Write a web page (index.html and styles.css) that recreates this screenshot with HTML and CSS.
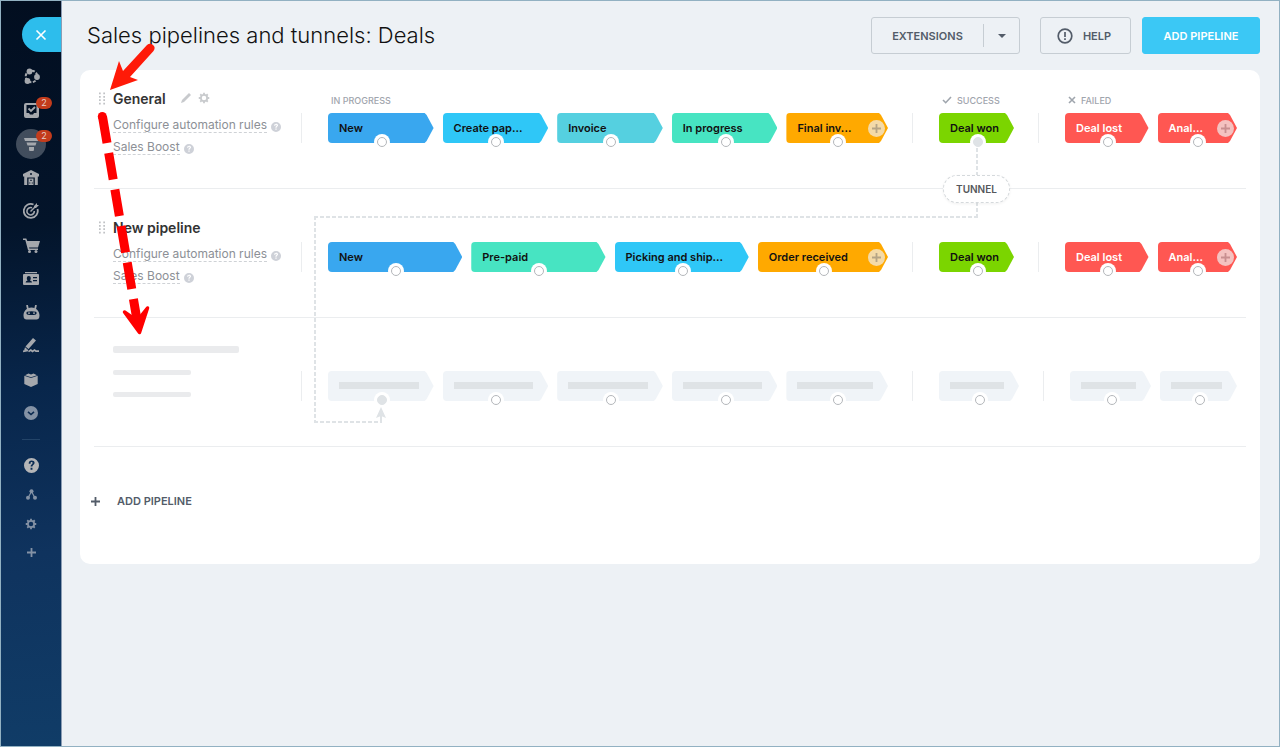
FILE: index.html
```html
<!DOCTYPE html>
<html lang="en">
<head>
  <meta charset="UTF-8" />
  <meta name="viewport" content="width=device-width, initial-scale=1.0" />
  <title>Sales pipelines and tunnels: Deals</title>
  <link rel="stylesheet" href="styles.css">
</head>
<body>
  <!-- shared icons -->
  <svg class="sprite" aria-hidden="true">
    <symbol id="help" viewBox="0 0 16 16">
      <path fill-rule="evenodd" fill="currentColor" d="M8 0a8 8 0 1 1 0 16A8 8 0 0 1 8 0zM5 6h2c0-1.500.3-1.700 1-1.700s1.200.4 1.200 1c0 1.300-2.200 1.400-2.200 3.700h2c0-1.600 2.300-1.800 2.300-3.900C11.300 3.500 9.900 2.600 8.100 2.600 6.200 2.600 5 3.800 5 6zm2 4.500v2h2v-2z"/>
    </symbol>
    <symbol id="gear" viewBox="0 0 16 16">
      <circle cx="8" cy="8" r="4.200" fill="none" stroke="currentColor" stroke-width="2.400"/>
      <path stroke="currentColor" stroke-width="2.400" d="M8 1v2.500M8 12.500V15M1 8h2.500M12.500 8H15M3 3l1.800 1.800M11.200 11.200L13 13M3 13l1.800-1.800M11.200 4.800L13 3"/>
    </symbol>
    <symbol id="plus" viewBox="0 0 10 10">
      <path d="M5 0v10M0 5h10" stroke="currentColor" stroke-width="2"/>
    </symbol>
    <symbol id="drag" viewBox="0 0 7 14">
      <path d="M0 1h2M5 1h2M0 5h2M5 5h2M0 9h2M5 9h2M0 13h2M5 13h2" stroke="currentColor" stroke-width="2"/>
    </symbol>
  </svg>

  <aside class="sidebar">
    <button class="close-btn" aria-label="Close">
      <svg width="12" height="12" viewBox="0 0 12 12"><path d="M1.500 1.500l9 9M10.500 1.500l-9 9" stroke="#fff" stroke-width="1.600"/></svg>
    </button>

    <nav class="menu">
      <a href="#" aria-label="Feed">
        <svg width="17" height="17" viewBox="0 0 17 17"><circle cx="8.500" cy="8.500" r="5.800" fill="none" stroke="currentColor" stroke-width="2" stroke-dasharray="3 1.500"/><circle cx="6.500" cy="3.500" r="2.900" fill="currentColor"/><circle cx="14" cy="9" r="2.900" fill="currentColor"/><circle cx="4.500" cy="13" r="2.900" fill="currentColor"/></svg>
      </a>
      <a href="#" aria-label="Tasks">
        <svg width="15" height="15" viewBox="0 0 15 15"><path fill-rule="evenodd" fill="currentColor" d="M2 0h11q2 0 2 2v11q0 2-2 2H2q-2 0-2-2V2q0-2 2-2zM2.500 2v8h2.500l1 1.500h3L10 10h2.500V2z"/><path d="M4.500 5.500L7 8l4-4" fill="none" stroke="currentColor" stroke-width="1.800"/></svg>
        <span class="badge">2</span>
      </a>
      <a href="#" class="active" aria-label="CRM">
        <svg width="15" height="13" viewBox="0 0 15 13"><path fill="currentColor" d="M0 0h15l-1 3H1zM2.500 4.500h10L11.500 7.500h-8zM5 9h5v2.500q0 1.500-1 1.500H6q-1 0-1-1.500z"/></svg>
        <span class="badge">2</span>
      </a>
      <a href="#" aria-label="Inventory">
        <svg width="16" height="15" viewBox="0 0 16 15"><path fill-rule="evenodd" fill="currentColor" d="M8 0l8 4v2.500h-1.200V15h-3V7.500H4.200V15h-3V6.500H0V4z"/><path fill="currentColor" d="M5.500 8.500h5V15h-5z"/><path fill="#06162c" d="M7 3.200h2v1.500H7zM7.300 9.800h1.400v1.200H7.300zM6.300 12.500h1v1h-1zM8.800 12.500h1v1h-1z"/></svg>
      </a>
      <a href="#" aria-label="Marketing">
        <svg width="16" height="16" viewBox="0 0 16 16" fill="none" stroke="currentColor"><path stroke-width="1.800" d="M10.500 1.500A7 7 0 1 0 14.500 6"/><path stroke-width="1.600" d="M9 4.800A3.700 3.700 0 1 0 11.300 8"/><path stroke-width="1.500" d="M7.500 8.500l6-6"/><path fill="currentColor" stroke="none" d="M11 3l3-3v2h2l-3 3h-2z"/></svg>
      </a>
      <a href="#" aria-label="Sites and stores">
        <svg width="17" height="15" viewBox="0 0 17 15"><path fill="currentColor" d="M0 .5h3.300l1 2.500H17l-2 6.500H6l.4 1H15V12H5L2.300 2H0z"/><circle cx="6.500" cy="13.500" r="1.500" fill="currentColor"/><circle cx="13" cy="13.500" r="1.500" fill="currentColor"/></svg>
      </a>
      <a href="#" aria-label="Contact center">
        <svg width="16" height="13" viewBox="0 0 16 13"><path fill-rule="evenodd" fill="currentColor" d="M2 0h12v1.200H2zM1 2h14q1 0 1 1v9q0 1-1 1H1q-1 0-1-1V3q0-1 1-1zm1.500 8.500H9q0-1.500-2-2 .8-1 .8-2.500 0-2-2-2t-2 2q0 1.500.8 2.500-2 .5-2 2zM10 5v1.200h4V5zm0 3v1.200h4V8z"/></svg>
      </a>
      <a href="#" aria-label="Robots">
        <svg width="17" height="15" viewBox="0 0 17 15"><path d="M4 0l1 4.500M13 0l-1 4.500" stroke="currentColor" stroke-width="1.800"/><path fill-rule="evenodd" fill="currentColor" d="M8.500 2.500c5 0 8 4 8 8 0 3-1.500 4-3 4h-10c-1.500 0-3-1-3-4 0-4 3-8 8-8zM4 6.800q-1.500 1.200 0 2.700 4.500 1 9 0 1.500-1.500 0-2.700-4.500-1-9 0z"/><path d="M5 8.100h2M10 8.100h2" stroke="currentColor" stroke-width="1.200"/></svg>
      </a>
      <a href="#" aria-label="E-signature">
        <svg width="16" height="15" viewBox="0 0 16 15"><path fill="currentColor" d="M10 0l3 2.500L5.500 11l-3-2.500zM2 9.200l2.700 2.200L1 12.800z"/><path d="M0 13.300l5-1M5.500 13.600l2.300-1.600 1.700 1.500 2-1.500 1.500 1.200H16" fill="none" stroke="currentColor" stroke-width="1.700"/></svg>
      </a>
      <a href="#" aria-label="Products">
        <svg width="14" height="14" viewBox="0 0 14 14"><path fill="currentColor" d="M7 5L.3 2.800V11L7 14l6.700-3V2.800zM7 4.300L1 2.200 4.500.6 7 1.600 9.500.6 13 2.200z"/></svg>
      </a>
      <a href="#" class="dim" aria-label="More">
        <svg width="14" height="14" viewBox="0 0 14 14"><circle cx="7" cy="7" r="7" fill="currentColor"/><path d="M4 5.800l3 2.700 3-2.700" fill="none" stroke="#0b2a50" stroke-width="1.600"/></svg>
      </a>
    </nav>

    <nav class="menu-bottom">
      <a href="#" class="bright" aria-label="Help"><svg width="15" height="15"><use href="#help"/></svg></a>
      <a href="#" aria-label="Sitemap"><svg width="11" height="11" viewBox="0 0 11 11"><path d="M5.500 2.500L2 9M5.500 2.500L9 9" stroke="currentColor" stroke-width="1.200"/><circle cx="5.500" cy="2.200" r="2" fill="currentColor"/><circle cx="2" cy="8.700" r="2" fill="currentColor"/><circle cx="9" cy="8.700" r="2" fill="currentColor"/></svg></a>
      <a href="#" aria-label="Settings"><svg width="12" height="12"><use href="#gear"/></svg></a>
      <a href="#" aria-label="Add"><svg width="9" height="9"><use href="#plus"/></svg></a>
    </nav>
  </aside>

  <main>
    <header>
      <h1>Sales pipelines and tunnels: Deals</h1>
      <div class="split-btn">
        <button class="split-main">Extensions</button>
        <button class="split-arrow" aria-label="More extensions"><svg width="8" height="4" viewBox="0 0 8 4"><path d="M0 0h8L4 4z" fill="currentColor"/></svg></button>
      </div>
      <button class="btn btn-help">
        <svg width="16" height="16" viewBox="0 0 16 16"><circle cx="8" cy="8" r="6.800" fill="none" stroke="currentColor" stroke-width="1.700"/><path d="M8 4v5M8 10.300V12" stroke="currentColor" stroke-width="1.700"/></svg>
        Help
      </button>
      <button class="btn btn-primary">Add pipeline</button>
    </header>

    <section class="card">
      <div class="board">
        <article class="pipeline">
          <div class="info">
            <div class="info-title">
              <svg class="drag" width="6" height="13"><use href="#drag"/></svg>
              <h2>General</h2>
              <button class="icon-btn first" aria-label="Rename"><svg width="10" height="10" viewBox="0 0 10 10"><path fill="currentColor" d="M8 0l2 2-7 7-3 1 1-3z"/></svg></button>
              <button class="icon-btn" aria-label="Settings"><svg width="12" height="12"><use href="#gear"/></svg></button>
            </div>
            <ul class="links">
              <li><a href="#">Configure automation rules</a><svg width="10" height="10"><use href="#help"/></svg></li>
              <li><a href="#">Sales Boost</a><svg width="10" height="10"><use href="#help"/></svg></li>
            </ul>
          </div>
          <div class="group">
            <h3>In progress</h3>
            <ul class="stages">
              <li><div class="stage blue"><span>New</span></div></li>
              <li><div class="stage sky"><span>Create pap...</span></div></li>
              <li><div class="stage aqua"><span>Invoice</span></div></li>
              <li><div class="stage mint"><span>In progress</span></div></li>
              <li><div class="stage orange"><span>Final inv...</span><button class="add-stage" aria-label="Add stage"><svg width="9" height="9"><use href="#plus"/></svg></button></div></li>
            </ul>
          </div>
          <div class="group">
            <h3><svg width="10" height="8" viewBox="0 0 10 8"><path d="M1 4l2.700 2.700L9 1" fill="none" stroke="currentColor" stroke-width="1.600"/></svg>Success</h3>
            <ul class="stages">
              <li><div class="stage green linked"><span>Deal won</span></div></li>
            </ul>
          </div>
          <div class="group failed">
            <h3><svg width="8" height="8" viewBox="0 0 8 8"><path d="M1 1l6 6M7 1L1 7" stroke="currentColor" stroke-width="1.600"/></svg>Failed</h3>
            <ul class="stages">
              <li><div class="stage red"><span>Deal lost</span></div></li>
              <li><div class="stage red"><span>Anal...</span><button class="add-stage" aria-label="Add stage"><svg width="9" height="9"><use href="#plus"/></svg></button></div></li>
            </ul>
          </div>
        </article>

        <article class="pipeline">
          <div class="info">
            <div class="info-title">
              <svg class="drag" width="6" height="13"><use href="#drag"/></svg>
              <h2>New pipeline</h2>
            </div>
            <ul class="links">
              <li><a href="#">Configure automation rules</a><svg width="10" height="10"><use href="#help"/></svg></li>
              <li><a href="#">Sales Boost</a><svg width="10" height="10"><use href="#help"/></svg></li>
            </ul>
          </div>
          <div class="group">
            <ul class="stages">
              <li><div class="stage blue"><span>New</span></div></li>
              <li><div class="stage mint"><span>Pre-paid</span></div></li>
              <li><div class="stage sky"><span>Picking and ship...</span></div></li>
              <li><div class="stage orange"><span>Order received</span><button class="add-stage" aria-label="Add stage"><svg width="9" height="9"><use href="#plus"/></svg></button></div></li>
            </ul>
          </div>
          <div class="group">
            <ul class="stages">
              <li><div class="stage green"><span>Deal won</span></div></li>
            </ul>
          </div>
          <div class="group failed">
            <ul class="stages">
              <li><div class="stage red"><span>Deal lost</span></div></li>
              <li><div class="stage red"><span>Anal...</span><button class="add-stage" aria-label="Add stage"><svg width="9" height="9"><use href="#plus"/></svg></button></div></li>
            </ul>
          </div>
        </article>

        <!-- placeholder row -->
        <article class="pipeline skeleton">
          <div class="info">
            <div class="bar bar-title"></div>
            <div class="bar"></div>
            <div class="bar"></div>
          </div>
          <div class="group">
            <ul class="stages">
              <li><div class="stage linked"></div></li>
              <li><div class="stage"></div></li>
              <li><div class="stage"></div></li>
              <li><div class="stage"></div></li>
              <li><div class="stage"></div></li>
            </ul>
          </div>
          <div class="group">
            <ul class="stages">
              <li><div class="stage"></div></li>
            </ul>
          </div>
          <div class="group failed">
            <ul class="stages">
              <li><div class="stage"></div></li>
              <li><div class="stage"></div></li>
            </ul>
          </div>
        </article>

        <!-- tunnel between the pipelines -->
        <div class="line line-out"></div>
        <div class="line line-across"></div>
        <div class="line line-down"></div>
        <div class="line line-back"></div>
        <svg class="line-arrow" width="10" height="16" viewBox="0 0 10 16"><path d="M5 0l5 11-5-2-5 2z" fill="#dfe3e6"/><path d="M5 9v6" stroke="#dfe3e6" stroke-width="2"/></svg>
        <button class="tunnel">Tunnel</button>
      </div>

      <button class="add-pipeline"><svg width="9" height="9"><use href="#plus"/></svg>Add pipeline</button>
    </section>
  </main>

  <!-- drag and drop hint -->
  <svg class="hint" width="80" height="300" viewBox="90 40 80 300" aria-hidden="true">
    <path fill="#ff1a08" d="M110 90l9-29 4 10 24-26q3-2.500 6 0t.5 6L130 77l8 3z"/>
    <circle cx="102.300" cy="116.500" r="4.500" fill="#ff0000"/>
    <path d="M102.500 116.500L137 320" stroke="#ff0000" stroke-width="9" stroke-dasharray="27 10"/>
    <path d="M124.500 312l15 20.500L147.500 308l-8 10-5 1z" fill="#ff0000" stroke="#ff0000" stroke-width="3.500" stroke-linejoin="round"/>
  </svg>
</body>
</html>
```
FILE: styles.css
```css
:root {
  --page: #edf1f5;
  --frame: #92b1c2;
  --text: #535c69;
  --muted: #9fa5ad;
  --line: #ebedef;
  --dash: #dfe3e6;
}

* {
  box-sizing: border-box;
  margin: 0;
  padding: 0;
}

body {
  display: flex;
  min-height: 100vh;
  position: relative;
  font-family: Inter, 'Liberation Sans', sans-serif;
  background: var(--page);
  border: 1px solid var(--frame);
}

button {
  font: inherit;
  color: inherit;
  background: none;
  border: none;
  cursor: pointer;
}

ul {
  list-style: none;
}

svg {
  display: block;
  flex-shrink: 0;
}

.sprite {
  position: absolute;
  width: 0;
  height: 0;
}

/* sidebar */

.sidebar {
  width: 61px;
  flex-shrink: 0;
  padding-top: 16px;
  border-right: 1px solid #8b9db4;
  background: linear-gradient(175deg, #020e20 0%, #03142a 30%, #08264b 52%, #0f335e 74%, #103c67 100%);
}

.close-btn {
  display: flex;
  align-items: center;
  justify-content: center;
  width: 39px;
  height: 35px;
  margin-left: auto;
  padding-right: 2px;
  border-radius: 18px 0 0 18px;
  background: #2dbdec;
}

.menu {
  display: flex;
  flex-direction: column;
  height: 370px;
  margin-top: 8px;
}

.menu a,
.menu-bottom a {
  display: flex;
  flex: 1;
  align-items: center;
  justify-content: center;
  position: relative;
  color: #a5a8ad;
}

.menu .dim,
.menu-bottom a {
  color: #8492a5;
}

.menu-bottom .bright {
  color: #b4b5b7;
}

.menu .active::before {
  content: "";
  position: absolute;
  width: 30px;
  height: 30px;
  border-radius: 50%;
  background: rgba(255, 255, 255, 0.25);
}

.menu .active svg {
  position: relative;
}

.badge {
  position: absolute;
  top: 3px;
  right: 9px;
  width: 16px;
  border-radius: 6px;
  background: #c33c1c;
  color: #e6d0ca;
  font-size: 9px;
  line-height: 12px;
  text-align: center;
}

.menu-bottom {
  display: flex;
  flex-direction: column;
  height: 128px;
  margin-top: 9px;
  padding-top: 12px;
  position: relative;
}

.menu-bottom::before {
  content: "";
  position: absolute;
  top: 0;
  left: 21px;
  width: 18px;
  border-top: 1px solid #234468;
}

/* header */

main {
  flex: 1;
  min-width: 0;
  padding: 16px 19px 20px 18px;
}

header {
  display: flex;
  align-items: center;
  height: 37px;
  margin-bottom: 16px;
  color: var(--text);
}

h1 {
  flex: 1;
  padding: 0 0 2px 7px;
  font-size: 22px;
  font-weight: 300;
  color: #111;
  white-space: nowrap;
}

.btn,
.split-btn {
  display: flex;
  align-items: center;
  justify-content: center;
  height: 37px;
  border: 1px solid #c6cdd3;
  border-radius: 3px;
  font-size: 11px;
  font-weight: 600;
  text-transform: uppercase;
}

.split-btn {
  width: 149px;
  margin-right: 20px;
}

.split-btn button {
  text-transform: uppercase;
}

.split-main {
  flex: 1;
  height: 23px;
  border-right: 1px solid #c6cdd3;
}

.split-arrow {
  display: flex;
  justify-content: center;
  width: 35px;
}

.btn-help {
  width: 91px;
  gap: 10px;
  margin-right: 11px;
  padding-right: 3px;
}

.btn-primary {
  width: 118px;
  border-color: #3bc8f5;
  background: #3bc8f5;
  color: #fff;
}

/* pipelines */

.card {
  border-radius: 10px;
  background: #fff;
}

.board {
  position: relative;
  margin: 0 14px;
}

.pipeline {
  display: grid;
  grid-template-columns: 207px 1fr 126px 208px;
  min-height: 129px;
  padding: 28px 0 30px;
  border-bottom: 1px solid var(--line);
}

.pipeline:first-child {
  min-height: 119px;
  padding-top: 18px;
}

.info {
  padding-left: 19px;
}

.info-title {
  display: flex;
  align-items: center;
  height: 20px;
  margin: 0 0 6px -14px;
}

.drag {
  margin-right: 8px;
  color: #c0c2c5;
}

h2 {
  font-size: 14px;
  font-weight: 600;
  color: #333;
}

.icon-btn {
  margin-left: 7px;
  color: #c8cacd;
}

.icon-btn.first {
  margin-left: 15px;
}

.links li {
  display: flex;
  align-items: center;
  gap: 4px;
  height: 22px;
  color: #ced1d8;
}

.links li svg {
  margin-top: 3px;
}

.links a {
  border-bottom: 1px dashed #cfd2d6;
  color: #8c9096;
  font-size: 12px;
  line-height: 14px;
  text-decoration: none;
  white-space: nowrap;
}

.group {
  display: grid;
  grid-template-rows: 25px 30px;
  min-width: 0;
}

h3 {
  display: flex;
  align-items: center;
  gap: 5px;
  height: 24px;
  padding-left: 30px;
  color: var(--muted);
  font-size: 9px;
  font-weight: 500;
  text-transform: uppercase;
}

.stages {
  display: grid;
  grid-auto-flow: column;
  grid-auto-columns: minmax(0, 1fr);
  grid-row: 2;
  padding: 0 11px 0 26px;
  border-left: 1px solid var(--line);
}

.failed .stages {
  margin-right: -4px;
  padding-right: 0;
}

.stages li {
  padding-right: 9px;
}

.stages li:last-child {
  padding-right: 13px;
}

.stage {
  display: flex;
  align-items: center;
  position: relative;
  height: 30px;
  padding-left: 11px;
  font-size: 11px;
  font-weight: 600;
  color: #111;
  white-space: nowrap;
}

/* arrow shaped body */
.stage::before {
  content: "";
  position: absolute;
  inset: 0;
  border-radius: 4px;
  clip-path: polygon(0 0, calc(100% - 9px) 0, calc(100% - 7px) 2px, 100% 50%, calc(100% - 7px) calc(100% - 2px), calc(100% - 9px) 100%, 0 100%);
}

/* connection point */
.stage::after {
  content: "";
  position: absolute;
  bottom: -4px;
  left: calc(50% - 4px);
  width: 8px;
  height: 8px;
  border: 1px solid #b4b7bb;
  border-radius: 50%;
  background: #fff;
  box-shadow: 0 0 0 3px #fff;
}

.stage.linked::after {
  border-color: var(--dash);
  background: var(--dash);
}

.stage span {
  position: relative;
}

.blue::before { background: #39a7ef; }
.sky::before { background: #2fc7f7; }
.aqua::before { background: #55d0e0; }
.mint::before { background: #47e4c2; }
.orange::before { background: #ffa900; }
.green::before { background: #7bd500; }
.red::before { background: #ff5752; }

.stage.red {
  color: #fff;
}

.add-stage {
  display: flex;
  align-items: center;
  justify-content: center;
  position: absolute;
  right: 3px;
  width: 17px;
  height: 17px;
  border-radius: 50%;
  background: rgba(240, 240, 240, 0.7);
}

.orange .add-stage {
  color: #b5a486;
}

.red .add-stage {
  color: #c88f90;
}

/* skeleton */

.skeleton {
  grid-template-columns: 207px 1fr 131px 203px;
}

.bar {
  width: 78px;
  height: 5px;
  margin-bottom: 17px;
  border-radius: 2px;
  background: #eaebed;
}

.bar-title {
  width: 126px;
  height: 7px;
}

.skeleton .stage::before {
  background: linear-gradient(var(--dash), var(--dash)) 11px 11px / calc(100% - 26px) 7px no-repeat, #f0f4f8;
}

/* tunnel */

.line {
  position: absolute;
  background: repeating-linear-gradient(90deg, var(--dash) 0 4px, transparent 4px 6px);
}

.line-out,
.line-down {
  width: 2px;
  background: repeating-linear-gradient(var(--dash) 0 4px, transparent 4px 6px);
}

.line-out {
  top: 78px;
  right: 268px;
  height: 70px;
}

.line-across {
  top: 146px;
  left: 220px;
  right: 268px;
  height: 2px;
}

.line-down {
  top: 146px;
  left: 220px;
  height: 207px;
}

.line-back {
  top: 351px;
  left: 220px;
  width: 68px;
  height: 2px;
}

.line-arrow {
  position: absolute;
  top: 337px;
  left: 282px;
}

.tunnel {
  position: absolute;
  top: 105px;
  right: 236px;
  width: 67px;
  height: 28px;
  border: 1px dashed #d5d9dc;
  border-radius: 14px;
  background: #fff;
  box-shadow: 0 1px 3px rgba(0, 0, 0, 0.06);
  color: #55585c;
  font-size: 10px;
  font-weight: 600;
  text-transform: uppercase;
}

.add-pipeline {
  display: flex;
  align-items: center;
  gap: 17px;
  padding: 44px 11px 53px;
  color: var(--text);
  font-size: 11px;
  font-weight: 600;
  line-height: 20px;
  text-transform: uppercase;
}

.hint {
  position: absolute;
  top: 39px;
  left: 89px;
  pointer-events: none;
}
```
